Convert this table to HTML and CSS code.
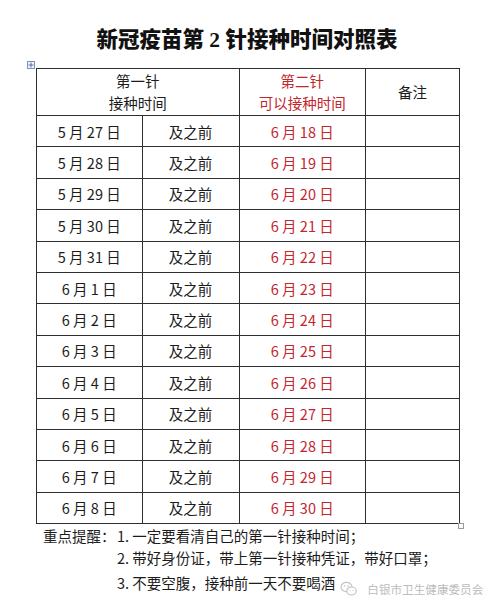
FILE: index.html
```html
<!DOCTYPE html>
<html lang="zh">
<head>
<meta charset="utf-8">
<title>新冠疫苗第2针接种时间对照表</title>
<link rel="stylesheet" href="styles.css">
</head>
<body>
<div class="page">
  <h1 class="title">新冠疫苗第 2 针接种时间对照表</h1>
  <div class="table-wrap">
    <svg class="move-handle" width="8" height="8" viewBox="0 0 8 8">
      <rect x="0.5" y="0.5" width="7" height="7" fill="#eef3fa" stroke="#7d94b5" stroke-width="1"/>
      <path d="M4 1.5V6.5M1.5 4H6.5" stroke="#4a6a99" stroke-width="0.9"/>
    </svg>
    <table class="schedule">
      <colgroup>
        <col class="c1"><col class="c2"><col class="c3"><col class="c4">
      </colgroup>
      <thead>
        <tr class="head-row">
          <th colspan="2">第一针<br>接种时间</th>
          <th class="red">第二针<br>可以接种时间</th>
          <th>备注</th>
        </tr>
      </thead>
      <tbody>
        <tr><td>5 月 27 日</td><td>及之前</td><td class="red">6 月 18 日</td><td></td></tr>
        <tr><td>5 月 28 日</td><td>及之前</td><td class="red">6 月 19 日</td><td></td></tr>
        <tr><td>5 月 29 日</td><td>及之前</td><td class="red">6 月 20 日</td><td></td></tr>
        <tr><td>5 月 30 日</td><td>及之前</td><td class="red">6 月 21 日</td><td></td></tr>
        <tr><td>5 月 31 日</td><td>及之前</td><td class="red">6 月 22 日</td><td></td></tr>
        <tr><td>6 月 1 日</td><td>及之前</td><td class="red">6 月 23 日</td><td></td></tr>
        <tr><td>6 月 2 日</td><td>及之前</td><td class="red">6 月 24 日</td><td></td></tr>
        <tr><td>6 月 3 日</td><td>及之前</td><td class="red">6 月 25 日</td><td></td></tr>
        <tr><td>6 月 4 日</td><td>及之前</td><td class="red">6 月 26 日</td><td></td></tr>
        <tr><td>6 月 5 日</td><td>及之前</td><td class="red">6 月 27 日</td><td></td></tr>
        <tr><td>6 月 6 日</td><td>及之前</td><td class="red">6 月 28 日</td><td></td></tr>
        <tr><td>6 月 7 日</td><td>及之前</td><td class="red">6 月 29 日</td><td></td></tr>
        <tr><td>6 月 8 日</td><td>及之前</td><td class="red">6 月 30 日</td><td></td></tr>
      </tbody>
    </table>
    <span class="resize-handle"></span>
  </div>
  <div class="notes">
    <div class="notes-label">重点提醒：</div>
    <ol class="notes-list">
      <li>1. 一定要看清自己的第一针接种时间；</li>
      <li>2. 带好身份证，带上第一针接种凭证，带好口罩；</li>
      <li class="last">
        <span>3. 不要空腹，接种前一天不要喝酒</span>
        <span class="watermark">
          <svg class="wm-icon" width="18" height="16" viewBox="0 0 18 16">
            <ellipse cx="6.5" cy="6" rx="5.5" ry="4.6" fill="none" stroke="#c4c4c4" stroke-width="1.2"/>
            <ellipse cx="11.5" cy="10" rx="4.8" ry="4" fill="#fff" stroke="#c4c4c4" stroke-width="1.2"/>
            <circle cx="4.5" cy="5" r="0.8" fill="#c4c4c4"/>
            <circle cx="8" cy="5" r="0.8" fill="#c4c4c4"/>
            <circle cx="10" cy="9.5" r="0.6" fill="#c4c4c4"/>
            <circle cx="13" cy="9.5" r="0.6" fill="#c4c4c4"/>
          </svg>
          <span class="wm-text">白银市卫生健康委员会</span>
        </span>
      </li>
    </ol>
  </div>
</div>
</body>
</html>
```

FILE: styles.css
```css
html, body {
  margin: 0;
  padding: 0;
  background: #ffffff;
}

body {
  font-family: "Noto Sans CJK SC", "Noto Sans", sans-serif;
  color: #1c1c1c;
}

.page {
  width: 500px;
  height: 608px;
  overflow: hidden;
}

.title {
  margin: 0;
  padding-top: 25px;
  padding-right: 6px;
  height: 30px;
  line-height: 30px;
  font-family: "Liberation Serif", "Noto Sans CJK SC", serif;
  font-size: 21.5px;
  font-weight: 900;
  text-align: center;
  color: #111;
  letter-spacing: 0;
}

.table-wrap {
  position: relative;
  margin-top: 13px;
  margin-left: 36px;
  width: 423px;
}

.move-handle {
  position: absolute;
  left: -9px;
  top: -7px;
  display: block;
}

.resize-handle {
  position: absolute;
  right: -5px;
  bottom: -5px;
  width: 4px;
  height: 4px;
  border: 1px solid #9a9a9a;
  background: #fff;
}

.schedule {
  border-collapse: collapse;
  table-layout: fixed;
  width: 423px;
  font-size: 14.5px;
}

.c1 { width: 105.5px; }
.c2 { width: 97px; }
.c3 { width: 126.5px; }
.c4 { width: 94px; }

.schedule th,
.schedule td {
  border: 1px solid #2e2e2e;
  padding: 0;
  text-align: center;
  vertical-align: middle;
  font-weight: 400;
  color: #1c1c1c;
}

.head-row {
  height: 47px;
}

.head-row th {
  line-height: 22px;
}

.schedule tbody tr {
  height: 31.4px;
}

.schedule tbody td {
  line-height: 20px;
  padding-top: 1px;
}

.schedule .red {
  color: #c2262e;
}

.notes {
  display: flex;
  margin-top: 1px;
  padding-left: 43px;
  font-size: 14.5px;
  line-height: 22px;
  color: #1c1c1c;
}

.notes-label {
  width: 74px;
  flex: none;
}

.notes-list {
  margin: 0;
  padding: 0;
  list-style: none;
}

.notes-list li {
  white-space: nowrap;
}

.last {
  display: flex;
  align-items: center;
}

.watermark {
  display: inline-flex;
  align-items: center;
  margin-left: 5px;
  margin-top: 12px;
}

.wm-icon {
  display: block;
  margin-right: 9px;
}

.wm-text {
  font-size: 11.6px;
  line-height: 14px;
  color: #bdbdbd;
}
```
